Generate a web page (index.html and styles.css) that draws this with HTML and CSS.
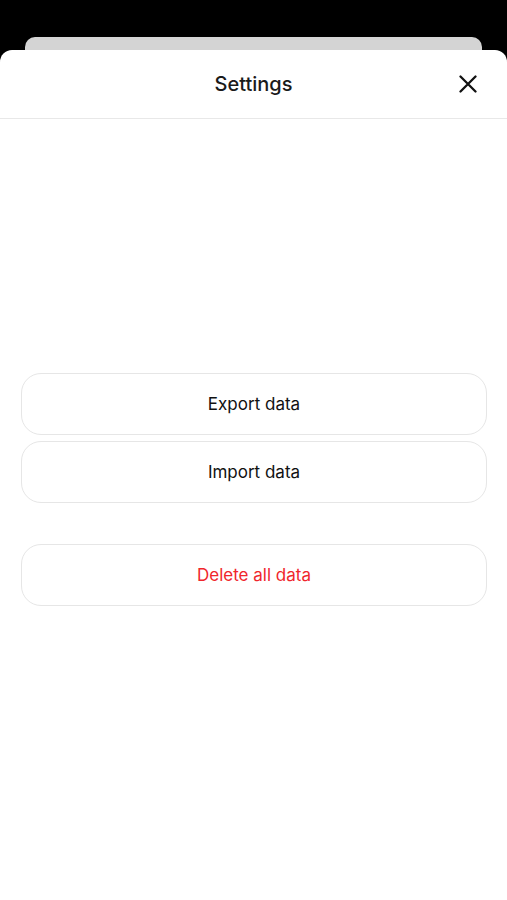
FILE: index.html
```html
<!DOCTYPE html>
<html lang="en">
<head>
  <meta charset="UTF-8" />
  <meta name="viewport" content="width=device-width, initial-scale=1.0"/>
  <title>Settings</title>
  <link rel="stylesheet" href="styles.css">
</head>
<body>

  <!-- card behind the sheet -->
  <div class="back-card"></div>

  <div class="sheet">
    <div class="sheet-header">
      <h1 class="sheet-title">Settings</h1>
      <button class="close-btn" aria-label="Close">
        <svg width="18" height="18" viewBox="0 0 18 18">
          <path d="M1.5 1.5 L16.5 16.5 M16.5 1.5 L1.5 16.5" stroke="#111" stroke-width="2.3" stroke-linecap="round" fill="none"/>
        </svg>
      </button>
    </div>

    <div class="sheet-body">
      <div class="btn-group">
        <button class="row-btn">Export data</button>
        <button class="row-btn">Import data</button>
      </div>
      <button class="row-btn danger">Delete all data</button>
    </div>
  </div>

</body>
</html>
```

FILE: styles.css
```css
body {
  margin: 0;
  padding: 0;
  background: #000;
  font-family: Inter, 'Noto Sans', sans-serif;
  color: #111;
}

.back-card {
  margin: 37px 25px 0;
  height: 13px;
  background: #d4d4d4;
  border-radius: 10px 10px 0 0;
}

.sheet {
  background: #fff;
  border-radius: 12px 12px 0 0;
  min-height: 850px;
}

.sheet-header {
  position: relative;
  height: 68px;
  display: flex;
  align-items: center;
  justify-content: center;
  border-bottom: 1px solid #e8e8e8;
}

.sheet-title {
  margin: 0;
  font-size: 20px;
  font-weight: 500;
  color: #1a1a1a;
}

.close-btn {
  position: absolute;
  right: 30px;
  top: 25px;
  width: 18px;
  height: 18px;
  padding: 0;
  border: none;
  background: none;
  cursor: pointer;
}

.close-btn svg {
  display: block;
}

.sheet-body {
  padding: 254px 20px 0 21px;
  display: flex;
  flex-direction: column;
  gap: 41px;
}

.btn-group {
  display: flex;
  flex-direction: column;
  gap: 6px;
}

.row-btn {
  box-sizing: border-box;
  height: 62px;
  width: 100%;
  border: 1px solid #e6e6e6;
  border-radius: 20px;
  background: #fff;
  font-family: Inter, 'Noto Sans', sans-serif;
  font-size: 17px;
  color: #111;
  cursor: pointer;
}

.row-btn.danger {
  color: #f0262c;
}
```
